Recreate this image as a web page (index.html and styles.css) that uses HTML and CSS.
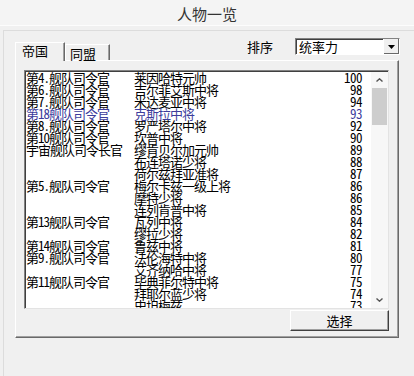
FILE: index.html
```html
<!DOCTYPE html>
<html lang="zh">
<head>
  <meta charset="UTF-8">
  <title>人物一览</title>
  <link rel="stylesheet" href="styles.css">
</head>
<body>
  <div class="dialog">
    <div class="title">人物一览</div>
    <div class="frame">
      <div class="tabbar">
        <div class="tab active">帝国</div>
        <div class="tab">同盟</div>
        <div class="sort">
          <span class="sort-label">排序</span>
          <div class="combo">
            <span class="combo-text">统率力</span>
            <span class="combo-btn">
              <svg width="7" height="4" viewBox="0 0 7 4"><path d="M0 0h7L3.5 4z" fill="#000"/></svg>
            </span>
          </div>
        </div>
      </div>
      <div class="page">
        <div class="listbox">
          <div class="rows">
            <div class="row"><span class="post">第4.舰队司令官</span><span class="name">莱因哈特元帅</span><span class="score">100</span></div>
            <div class="row"><span class="post">第6.舰队司令官</span><span class="name">吉尔菲艾斯中将</span><span class="score">98</span></div>
            <div class="row"><span class="post">第7.舰队司令官</span><span class="name">米达麦亚中将</span><span class="score">94</span></div>
            <div class="row marked"><span class="post">第18舰队司令官</span><span class="name">克斯拉中将</span><span class="score">93</span></div>
            <div class="row"><span class="post">第8.舰队司令官</span><span class="name">罗严塔尔中将</span><span class="score">92</span></div>
            <div class="row"><span class="post">第10舰队司令官</span><span class="name">坎普中将</span><span class="score">90</span></div>
            <div class="row"><span class="post">宇宙舰队司令长官</span><span class="name">缪肯贝尔加元帅</span><span class="score">89</span></div>
            <div class="row"><span class="post"></span><span class="name">布连塔诺少将</span><span class="score">88</span></div>
            <div class="row"><span class="post"></span><span class="name">荷尔兹拜亚准将</span><span class="score">87</span></div>
            <div class="row"><span class="post">第5.舰队司令官</span><span class="name">梅尔卡兹一级上将</span><span class="score">86</span></div>
            <div class="row"><span class="post"></span><span class="name">摩特少将</span><span class="score">86</span></div>
            <div class="row"><span class="post"></span><span class="name">连列肯普中将</span><span class="score">85</span></div>
            <div class="row"><span class="post">第13舰队司令官</span><span class="name">瓦列中将</span><span class="score">84</span></div>
            <div class="row"><span class="post"></span><span class="name">缪拉少将</span><span class="score">82</span></div>
            <div class="row"><span class="post">第14舰队司令官</span><span class="name">鲁兹中将</span><span class="score">81</span></div>
            <div class="row"><span class="post">第9.舰队司令官</span><span class="name">法伦海特中将</span><span class="score">80</span></div>
            <div class="row"><span class="post"></span><span class="name">艾齐纳哈中将</span><span class="score">77</span></div>
            <div class="row"><span class="post">第11舰队司令官</span><span class="name">毕典菲尔特中将</span><span class="score">75</span></div>
            <div class="row"><span class="post"></span><span class="name">拜耶尔蓝少将</span><span class="score">74</span></div>
            <div class="row"><span class="post"></span><span class="name">史坦梅兹</span><span class="score">73</span></div>
          </div>
          <div class="scrollbar">
            <div class="arrow">
              <svg width="7" height="4" viewBox="0 0 7 4"><path d="M0.5 3.5L3.5 0.8L6.5 3.5" fill="none" stroke="#555" stroke-width="1.4"/></svg>
            </div>
            <div class="thumb"></div>
            <div class="track"></div>
            <div class="arrow">
              <svg width="7" height="4" viewBox="0 0 7 4"><path d="M0.5 0.5L3.5 3.2L6.5 0.5" fill="none" stroke="#555" stroke-width="1.4"/></svg>
            </div>
          </div>
        </div>
        <div class="actions">
          <button class="btn" type="button">选择</button>
        </div>
      </div>
    </div>
  </div>
</body>
</html>
```

FILE: styles.css
```css
body {
  margin: 0;
  background: #f0f0f0;
  color: #000;
  font-family: "Noto Sans CJK SC", sans-serif;
}
.dialog {
  width: 414px;
  height: 376px;
  display: flex;
  flex-direction: column;
}
.title {
  height: 25px;
  line-height: 27px;
  text-align: center;
  font-size: 15px;
  color: #333;
  background: #f4f4f4;
  border-bottom: 1px solid #fcfcfc;
}
.frame {
  flex: 1;
  margin: 4px 0 0 3px;
  padding: 6px 0 0 11px;
  border-top: 1px solid #dcdcdc;
  border-left: 1px solid #dcdcdc;
}
.tabbar {
  width: 385px;
  height: 23px;
  display: flex;
  align-items: flex-end;
  font-size: 13px;
}
.tab {
  box-sizing: border-box;
  width: 45px;
  height: 16px;
  line-height: 17px;
  padding-left: 4px;
  border: 1px solid #fff;
  border-bottom: none;
  border-right-color: #696969;
  box-shadow: inset -1px 0 0 #a0a0a0;
  background: #f0f0f0;
}
.tab.active {
  position: relative;
  z-index: 1;
  width: 50px;
  height: 19px;
  line-height: 16px;
  padding-left: 6px;
  margin-bottom: -1px;
}
.sort {
  margin-left: auto;
  align-self: flex-start;
  display: flex;
  align-items: center;
  gap: 22px;
}
.combo {
  box-sizing: border-box;
  width: 105px;
  height: 17px;
  display: flex;
  background: #fff;
  border: 1px solid;
  border-color: #828282 #fff #fff #828282;
  box-shadow: inset 1px 1px 0 #404040;
}
.combo-text {
  flex: 1;
  padding-left: 3px;
  line-height: 15px;
}
.combo-btn {
  width: 15px;
  display: flex;
  align-items: center;
  justify-content: center;
  background: #f0f0f0;
  border-left: 1px solid #fff;
  box-shadow: inset -1px -1px 0 #696969;
}
.page {
  box-sizing: border-box;
  width: 384px;
  height: 278px;
  border: 1px solid;
  border-color: #fff #696969 #696969 #fff;
  box-shadow: inset -1px -1px 0 #a0a0a0;
}
.listbox {
  box-sizing: border-box;
  height: 239px;
  margin: 9px 9px 0 8px;
  padding: 1px 0 0 1px;
  display: flex;
  background: #fff;
  border: 1px solid;
  border-color: #828282 #e3e3e3 #e3e3e3 #828282;
  box-shadow: inset 1px 1px 0 #404040;
}
.rows {
  flex: 1;
  overflow: hidden;
  font-size: 13px;
  letter-spacing: -1px;
  font-feature-settings: "hwid";
}
.row {
  display: flex;
  height: 12px;
  line-height: 12px;
  white-space: nowrap;
}
.row.marked {
  color: #3c3c9c;
}
.post {
  width: 108px;
}
.name {
  flex: 1;
}
.score {
  width: 30px;
  padding-right: 9px;
  text-align: right;
  letter-spacing: -0.5px;
}
.scrollbar {
  width: 17px;
  display: flex;
  flex-direction: column;
  background: #f7f7f7;
}
.arrow {
  height: 16px;
  display: flex;
  align-items: center;
  justify-content: center;
}
.thumb {
  height: 37px;
  margin: 0 1px;
  background: #cdcdcd;
}
.track {
  flex: 1;
}
.actions {
  display: flex;
  justify-content: flex-end;
  padding: 1px 9px 0 0;
}
.btn {
  box-sizing: border-box;
  width: 99px;
  height: 21px;
  padding: 0;
  font-family: inherit;
  font-size: 13px;
  color: #000;
  background: #f0f0f0;
  border: 1px solid;
  border-color: #fff #404040 #404040 #fff;
  box-shadow: inset -1px -1px 0 #a0a0a0;
}
```
